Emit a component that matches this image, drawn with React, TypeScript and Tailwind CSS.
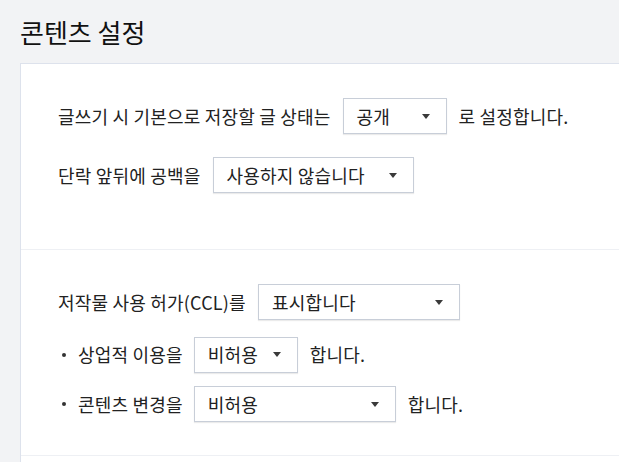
function Caret() {
  return (
    <svg width="8" height="5" viewBox="0 0 8 5" className="shrink-0">
      <path d="M0 0h8L4 5z" fill="#3a3a3a" />
    </svg>
  );
}

function Select({ value, width }: { value: string; width: string }) {
  return (
    <div
      className={`${width} h-[36px] shrink-0 flex items-center justify-between pl-[13px] pr-[16px] bg-white border border-[#c8ced8] shadow-[0_1px_1px_rgba(0,0,0,0.08)] text-[18px] text-[#222]`}
    >
      <span>{value}</span>
      <Caret />
    </div>
  );
}

export default function App() {
  return (
    <div
      className="h-screen w-full overflow-hidden bg-[#f2f3f5] text-[#222]"
      style={{ fontFamily: '"Noto Sans CJK KR", "Noto Sans", sans-serif' }}
    >
      {/* Title */}
      <h1 className="pl-[20px] pt-[14px] h-[63px] text-[26px] leading-[36px] text-[#111] font-normal">
        콘텐츠 설정
      </h1>

      {/* Card */}
      <div className="ml-[20px] w-[640px] bg-white border-t border-l border-[#dde2ec] tracking-[0.2px]">
        {/* Section 1 */}
        <div className="pl-[37px] pt-[34px] pb-[56px] border-b border-[#eef0f4] text-[18px]">
          <div className="flex items-center gap-[12px] h-[36px]">
            <span>글쓰기 시 기본으로 저장할 글 상태는</span>
            <Select value="공개" width="w-[104px]" />
            <span>로 설정합니다.</span>
          </div>
          <div className="flex items-center gap-[12px] h-[36px] mt-[23px]">
            <span>단락 앞뒤에 공백을</span>
            <Select value="사용하지 않습니다" width="w-[201px]" />
          </div>
        </div>

        {/* Section 2 */}
        <div className="pl-[37px] pt-[34px] pb-[33px] border-b border-[#eef0f4] text-[18px]">
          <div className="flex items-center gap-[12px] h-[36px]">
            <span>저작물 사용 허가(CCL)를</span>
            <Select value="표시합니다" width="w-[202px]" />
          </div>
          <div className="flex items-center h-[37px] mt-[16px]">
            <span className="w-[4px] h-[4px] rounded-full bg-[#333] ml-[4px] mr-[12px]" />
            <span className="mr-[11px]">상업적 이용을</span>
            <Select value="비허용" width="w-[104px]" />
            <span className="ml-[12px]">합니다.</span>
          </div>
          <div className="flex items-center h-[36px] mt-[13px]">
            <span className="w-[4px] h-[4px] rounded-full bg-[#333] ml-[4px] mr-[12px]" />
            <span className="mr-[11px]">콘텐츠 변경을</span>
            <Select value="비허용" width="w-[202px]" />
            <span className="ml-[12px]">합니다.</span>
          </div>
        </div>
        <div className="h-[40px]" />
      </div>
    </div>
  );
}
